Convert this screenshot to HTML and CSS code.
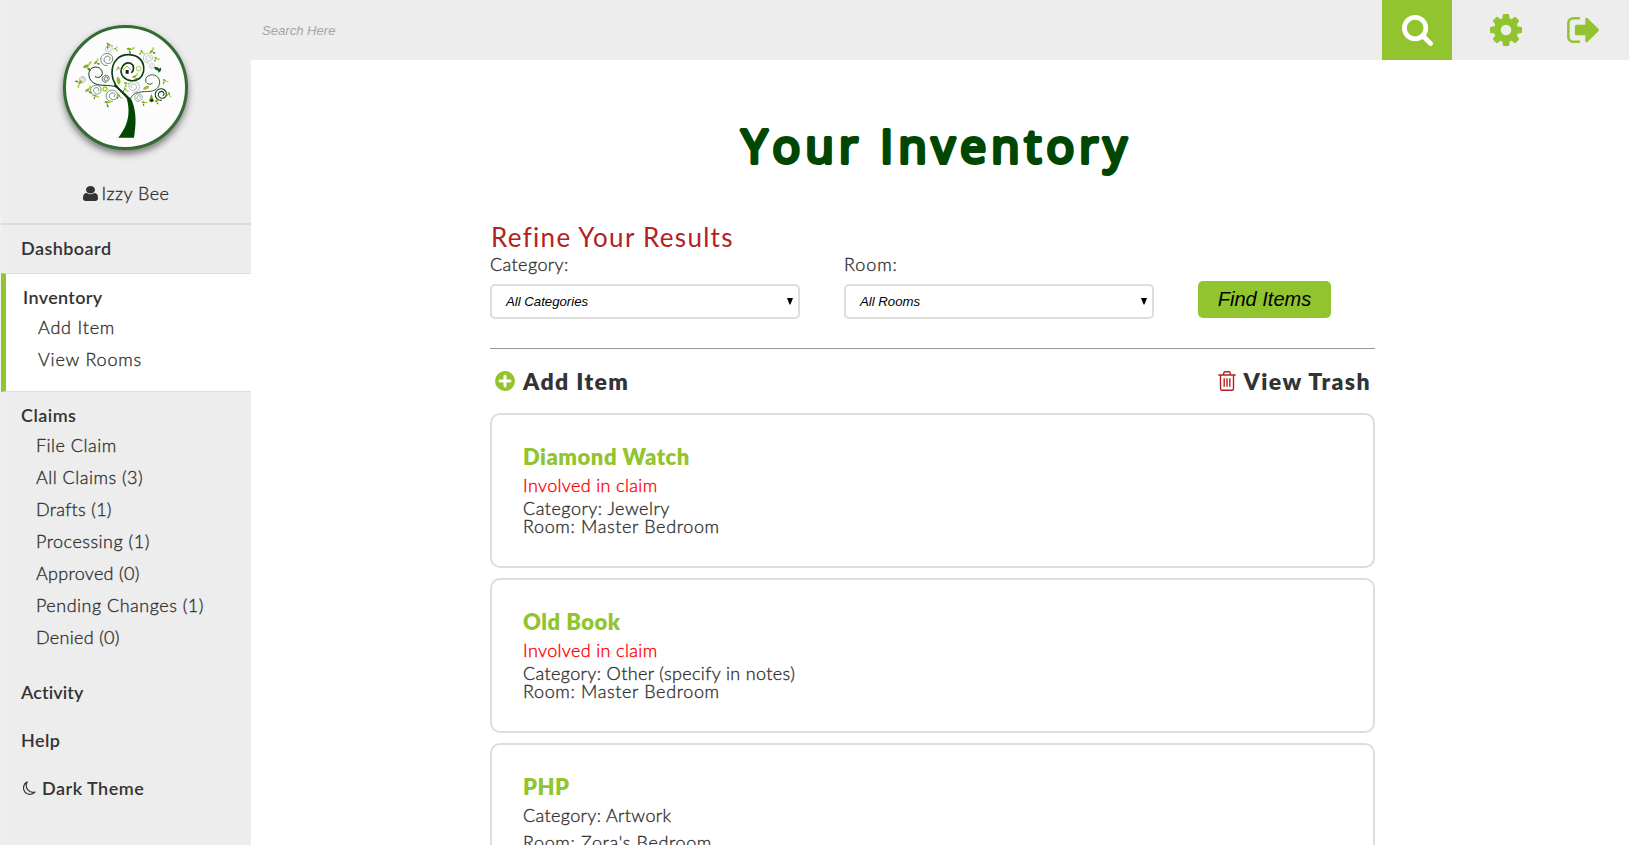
FILE: index.html
```html
<!DOCTYPE html>
<html lang="en">
<head>
<meta charset="utf-8">
<title>Your Inventory</title>
<link rel="stylesheet" href="styles.css">
</head>
<body>
<aside class="sidebar">
  <div class="profile">
    <div class="logo">
      <svg viewBox="33 39 357 357" width="119" height="119">
        <defs>
          <path id="curl" d="M0 22C-14 24-24 12-23-1C-22-15-8-23 5-20C17-17 22-4 17 7C12 16-2 18-9 9C-15 1-10-10 0-11C9-12 13-1 7 4" fill="none" stroke-linecap="round"/>
          <path id="leaf" d="M-9 4C-7-5 2-7 10-5C7 3 0 7-9 4Z"/>
          <g id="sprig">
            <use href="#leaf" fill="#7fae1c"/>
            <use href="#leaf" fill="#b5d334" transform="translate(12 -9) rotate(-30) scale(.8)"/>
            <use href="#leaf" fill="#4b8a2a" transform="translate(9 9) rotate(60) scale(.7)"/>
          </g>
        </defs>
        <path d="M190 368C216 336 228 300 216 253L222 247L230 255C247 295 242 335 237 368Z" fill="#014701"/>
        <g fill="none" stroke="#0b3b12" stroke-linecap="round">
          <path d="M222 256C205 230 172 215 171 175C170 140 192 118 222 119C253 120 269 142 266 167C262 190 245 199 228 197C208 194 195 180 199 162C203 147 216 141 227 145C238 151 238 166 230 172" stroke-width="5"/>
          <path d="M192 221C172 205 142 216 120 206C102 198 96 175 107 162C119 151 139 156 142 172C143 184 130 192 121 185" stroke-width="3"/>
          <path d="M226 252C234 228 262 231 286 229C306 227 319 210 312 192C304 176 280 175 273 190C268 203 281 213 292 205" stroke-width="2.5"/>
          <path d="M222 250C205 232 190 222 180 211" stroke-width="5"/>
        </g>
        <g stroke="#3c5a42" stroke-width="2.5">
          <use href="#curl" transform="translate(157 133) scale(.85)"/>
          <use href="#curl" transform="translate(124 226) scale(.75)"/>
          <use href="#curl" transform="translate(172 242) scale(.8)"/>
          <use href="#curl" transform="translate(319 238) scale(.8)" stroke="#0b3b12" stroke-width="4"/>
          <use href="#curl" transform="translate(236 215) scale(-.75 .75)" stroke="#8a9a8c"/>
          <use href="#curl" transform="translate(280 129) scale(.65)" stroke="#8a9a8c"/>
          <use href="#curl" transform="translate(252 248) scale(.55)"/>
          <use href="#curl" transform="translate(153 191) scale(.5)" stroke="#0b3b12" stroke-width="4"/>
          <use href="#curl" transform="translate(83 194) scale(.45)"/>
          <use href="#curl" transform="translate(163 101) scale(.5)" stroke="#8a9a8c"/>
          <use href="#curl" transform="translate(291 153) scale(.4)" stroke="#8a9a8c"/>
        </g>
        <use href="#sprig" transform="translate(160 88) rotate(60) scale(.7)"/>
        <use href="#sprig" transform="translate(93 154)"/>
        <use href="#sprig" transform="translate(122 143) rotate(-20) scale(.7)"/>
        <use href="#sprig" transform="translate(75 202) rotate(150) scale(.8)"/>
        <use href="#sprig" transform="translate(97 226) rotate(-10) scale(.8)"/>
        <use href="#sprig" transform="translate(120 242) rotate(60) scale(.6)"/>
        <use href="#sprig" transform="translate(155 262) rotate(30) scale(.8)"/>
        <use href="#sprig" transform="translate(192 242) rotate(80) scale(.6)"/>
        <use href="#sprig" transform="translate(180 101) scale(.5)"/>
        <use href="#sprig" transform="translate(222 102) rotate(30) scale(.8)"/>
        <use href="#sprig" transform="translate(260 109) rotate(80) scale(.6)"/>
        <use href="#sprig" transform="translate(289 110) rotate(-20) scale(.7)"/>
        <use href="#sprig" transform="translate(302 129) rotate(60) scale(.6)"/>
        <use href="#leaf" fill="#145c1c" transform="translate(306 162) rotate(50)"/>
        <use href="#leaf" fill="#145c1c" transform="translate(314 166) rotate(-40) scale(.8)"/>
        <use href="#sprig" transform="translate(328 196) rotate(60) scale(.6)"/>
        <use href="#sprig" transform="translate(342 236) rotate(100) scale(.6)"/>
        <use href="#sprig" transform="translate(304 258) rotate(20) scale(.6)"/>
        <use href="#sprig" transform="translate(265 262) rotate(40) scale(.6)"/>
        <use href="#sprig" transform="translate(210 222) rotate(80) scale(.6)"/>
        <use href="#sprig" transform="translate(212 205) rotate(40) scale(.6)"/>
        <use href="#sprig" transform="translate(238 185) scale(.7)"/>
        <use href="#sprig" transform="translate(190 158) rotate(80) scale(.5)"/>
        <use href="#leaf" fill="#9bbf22" transform="translate(191 197) rotate(-80) scale(1.2)"/>
        <use href="#leaf" fill="#9bbf22" transform="translate(273 219)"/>
        <circle cx="150" cy="222" r="6" fill="none" stroke="#a5cc2a" stroke-width="4"/>
        <circle cx="251" cy="161" r="7" fill="none" stroke="#a5cc2a" stroke-width="3"/>
        <path d="M204 165L216 153L228 165" fill="none" stroke="#8fc42d" stroke-width="3"/>
        <path d="M212 165h9v11h-9z" fill="#1c1c1c"/>
        <path d="M289 236L297 258Q289 266 282 258Z" fill="#6d9a25"/>
        <circle cx="290" cy="256" r="4" fill="#1c1c1c"/>
      </svg>
    </div>
    <div class="user">
      <svg class="user-icon" viewBox="256 128 1280 1536" preserveAspectRatio="none"><path d="M1536 1399q0 109-62.500 187t-150.500 78h-854q-88 0-150.500-78t-62.500-187q0-85 8.500-160.500t31.500-152 58.500-131 94-89 134.500-34.500q131 128 313 128t313-128q76 0 134.500 34.500t94 89 58.500 131 31.500 152 8.500 160.500zm-256-887q0 159-112.500 271.500t-271.500 112.500-271.500-112.500-112.500-271.500 112.500-271.500 271.500-112.500 271.500 112.500 112.500 271.500z"/></svg>
      <span>Izzy Bee</span>
    </div>
  </div>
  <nav>
    <div class="group dashboard"><a class="top">Dashboard</a></div>
    <div class="group active">
      <a class="top tight">Inventory</a>
      <a class="sub wide">Add Item</a>
      <a class="sub wide">View Rooms</a>
    </div>
    <div class="group claims">
      <a class="top">Claims</a>
      <a class="sub">File Claim</a>
      <a class="sub">All Claims (3)</a>
      <a class="sub narrow">Drafts (1)</a>
      <a class="sub">Processing (1)</a>
      <a class="sub narrow">Approved (0)</a>
      <a class="sub">Pending Changes (1)</a>
      <a class="sub narrow">Denied (0)</a>
    </div>
    <div class="group plain"><a class="top snug">Activity</a></div>
    <div class="group plain"><a class="top">Help</a></div>
    <div class="group plain"><a class="top theme">
      <svg class="moon" viewBox="0 0 15 15"><path d="M6.200 .9A6.600 6.600 0 1 0 14 11.200A7 7 0 0 1 6.200 .9Z" fill="none" stroke="#333" stroke-width="1.200" stroke-linejoin="round"/></svg>Dark Theme</a></div>
  </nav>
</aside>

<div class="page">
  <header class="topbar">
    <div class="search">Search Here</div>
    <div class="search-btn">
      <svg width="31" height="31" viewBox="64 128 1664 1664"><path d="M1216 832q0-185-131.500-316.500t-316.500-131.500-316.500 131.500-131.500 316.500 131.500 316.500 316.500 131.500 316.500-131.500 131.500-316.500zm512 832q0 52-38 90t-90 38q-54 0-90-38l-343-342q-179 124-399 124-143 0-273.500-55.500t-225-150-150-225-55.500-273.500 55.500-273.500 150-225 225-150 273.500-55.500 273.500 55.500 225 150 150 225 55.500 273.500q0 220-124 399l343 343q37 37 37 90z"/></svg>
    </div>
    <svg class="cog" width="32" height="32" viewBox="128 128 1536 1536"><path d="M1152 896q0-106-75-181t-181-75-181 75-75 181 75 181 181 75 181-75 75-181zm512-109v222q0 12-8 23t-20 13l-185 28q-19 54-39 91 35 50 107 138 10 12 10 25t-9 23q-27 37-99 108t-94 71q-12 0-26-9l-138-108q-44 23-91 38-16 136-29 186-7 28-36 28h-222q-14 0-24.500-8.500t-11.500-21.500l-28-184q-49-16-90-37l-141 107q-10 9-25 9-14 0-25-11-126-114-165-168-7-10-7-23 0-12 8-23 15-21 51-66.500t54-70.500q-27-50-41-99l-183-27q-13-2-21-12.500t-8-23.500v-222q0-12 8-23t19-13l186-28q14-46 39-92-40-57-107-138-10-12-10-24 0-10 9-23 26-36 98.500-107.500t94.500-71.500q13 0 26 10l138 107q44-23 91-38 16-136 29-186 7-28 36-28h222q14 0 24.500 8.500t11.500 21.500l28 184q49 16 90 37l142-107q9-9 24-9 13 0 25 10 129 119 165 170 7 8 7 22 0 12-8 23-15 21-51 66.500t-54 70.500q26 50 41 98l183 28q13 2 21 12.500t8 23.500z"/></svg>
    <svg class="signout" width="32" height="26" viewBox="64 256 1568 1280"><path d="M704 1440q0 4 1 20t.5 26.500-3 23.500-10 19.500-20.500 6.500h-320q-119 0-203.500-84.500t-84.500-203.500v-704q0-119 84.500-203.500t203.500-84.500h320q13 0 22.500 9.500t9.500 22.500q0 4 1 20t.5 26.500-3 23.500-10 19.500-20.500 6.500h-320q-66 0-113 47t-47 113v704q0 66 47 113t113 47h312l11.500 1 11.500 3 8 5.500 7 9 2 13.500zm928-544q0 26-19 45l-544 544q-19 19-45 19t-45-19-19-45v-288h-448q-26 0-45-19t-19-45v-384q0-26 19-45t45-19h448v-288q0-26 19-45t45-19 45 19l544 544q19 19 19 45z"/></svg>
  </header>

  <main class="content">
    <h1><svg width="885" height="70"><text class="headline" x="251.500" y="53" textLength="385">Your Inventory</text></svg></h1>
    <h2>Refine Your Results</h2>
    <div class="filters">
      <div class="field">
        <label>Category:</label>
        <div class="select"><span>All Categories</span><svg width="6" height="7" viewBox="0 0 7 7" preserveAspectRatio="none"><path d="M0 0H7L4 6.500H3Z"/></svg></div>
      </div>
      <div class="field">
        <label class="room">Room:</label>
        <div class="select"><span>All Rooms</span><svg width="6" height="7" viewBox="0 0 7 7" preserveAspectRatio="none"><path d="M0 0H7L4 6.500H3Z"/></svg></div>
      </div>
      <div class="find">Find Items</div>
    </div>
    <hr>
    <div class="actions">
      <a class="add"><svg width="20" height="20" viewBox="0 0 20 20"><circle cx="10" cy="10" r="10" fill="#91c42e"/><path d="M10 5V15M5 10H15" stroke="#fff" stroke-width="3" stroke-linecap="round"/></svg>Add Item</a>
      <a class="trash"><svg width="18" height="20" viewBox="0 0 18 20" fill="none" stroke="#b22222" stroke-width="1.400"><path d="M.3 4H17.700M2.500 4V17.500Q2.500 19.300 4 19.300H14Q15.500 19.300 15.500 17.500V4M5.200 4L6 1.500Q6.200 .7 7 .7H11Q11.800 .7 12 1.500L12.800 4M6.200 7.300V15.800M9 7.300V15.800M11.800 7.300V15.800"/></svg>View Trash</a>
    </div>
    <div class="cards">
      <article class="card">
        <h3>Diamond Watch</h3>
        <p class="flag">Involved in claim</p>
        <p class="line short">Category: Jewelry</p>
        <p class="line place">Room: Master Bedroom</p>
      </article>
      <article class="card">
        <h3>Old Book</h3>
        <p class="flag">Involved in claim</p>
        <p class="line">Category: Other (specify in notes)</p>
        <p class="line place">Room: Master Bedroom</p>
      </article>
      <article class="card loose">
        <h3>PHP</h3>
        <p class="line">Category: Artwork</p>
        <p class="line place">Room: Zora's Bedroom</p>
      </article>
    </div>
  </main>
</div>
</body>
</html>
```
FILE: styles.css
```css
* { box-sizing: border-box; }
body {
  margin: 0;
  height: 845px;
  overflow: hidden;
  display: flex;
  background: #fff;
  color: #333;
  font: 300 18px/18px Lato, "Open Sans", sans-serif;
}
h1, h2, h3, p { margin: 0; }
svg { display: block; flex: none; }

.sidebar {
  width: 251px;
  height: 845px;
  flex: none;
  background: #ededed;
  border-left: 1px solid #f0f0f0;
}
.profile {
  height: 225px;
  padding-top: 25px;
  border-bottom: 2px solid #ddd;
  display: flex;
  flex-direction: column;
  align-items: center;
}
.logo {
  width: 125px;
  height: 125px;
  margin-right: 1px;
  border: 3px solid #346b35;
  border-radius: 50%;
  background: #fcfcfc;
  box-shadow: 0 4px 7px rgba(0, 0, 0, .5);
  overflow: hidden;
}
.user {
  margin-top: 29px;
  display: flex;
  align-items: center;
  gap: 4px;
  line-height: 28px;
  letter-spacing: .5px;
}
.user-icon { width: 15px; height: 15px; fill: #333; }

/* Firms up the light weight at body sizes */
.user, .sub, label, .line, .flag { -webkit-text-stroke: .35px currentColor; }

.group { padding-left: 20px; }
.top {
  display: block;
  font-weight: 600;
  line-height: 28px;
  letter-spacing: .45px;
}
.tight { letter-spacing: .35px; }
.snug { letter-spacing: .1px; }
.theme { display: flex; align-items: center; gap: 6px; letter-spacing: .5px; }
.moon { width: 15px; height: 15px; }
.sub {
  display: block;
  padding-left: 15px;
  line-height: 32px;
  letter-spacing: .5px;
}
.wide { padding-left: 15px; letter-spacing: .8px; }
.narrow { letter-spacing: .3px; }
.dashboard { padding-top: 9px; padding-bottom: 11px; }
.active {
  padding: 9px 0 16px 17px;
  background: #fff;
  border-left: 5px solid #91c42e;
  border-top: 1px solid #ddd;
  border-bottom: 1px solid #ddd;
}
.claims { padding-top: 9px; padding-bottom: 15px; }
.plain { padding-top: 10px; padding-bottom: 10px; }

.page { flex: 1; min-width: 0; }
.topbar {
  height: 60px;
  background: #ededed;
  display: flex;
  align-items: center;
  padding-right: 30px;
}
.search {
  flex: 1;
  padding-left: 11px;
  color: #a5a5a5;
  font: italic 13.1px "Liberation Sans", sans-serif;
}
.search-btn {
  width: 70px;
  height: 60px;
  margin-right: 38px;
  background: #91c42e;
  fill: #fff;
  display: flex;
  align-items: center;
  justify-content: center;
}
.cog, .signout { fill: #91c42e; }
.cog { margin-right: 45px; }

.content { width: 885px; margin-left: 239px; padding-top: 50px; }
.headline {
  font: 500 46px "Open Sans", sans-serif;
  fill: #014701;
  stroke: #014701;
  stroke-width: 4px;
  stroke-linejoin: round;
}
h2 {
  margin-top: 42px;
  padding-left: 1px;
  font-size: 26px;
  line-height: 30px;
  font-weight: 400;
  letter-spacing: 1.3px;
  color: #b22222;
}
.filters { display: flex; gap: 44px; margin-top: 3px; align-items: flex-start; }
.field { width: 310px; }
label { display: block; line-height: 18px; letter-spacing: .4px; }
.room { letter-spacing: .9px; }
.select {
  height: 35px;
  margin-top: 11px;
  padding: 0 5px 0 14px;
  border: 2px solid #ddd;
  border-radius: 5px;
  display: flex;
  align-items: center;
  justify-content: space-between;
  color: #000;
  font: italic 13.2px "Liberation Sans", sans-serif;
}
.find {
  width: 133px;
  height: 37px;
  margin-top: 26px;
  border-radius: 5px;
  background: #91c42e;
  color: #000;
  font: italic 20px/36px "Liberation Sans", sans-serif;
  text-align: center;
}
hr {
  height: 2px;
  margin: 29px 0 0;
  border: 0;
  border-top: 1px solid #999;
}
.actions {
  display: flex;
  justify-content: space-between;
  margin-top: 16px;
  padding: 0 4px 0 5px;
  font-size: 23px;
  line-height: 30px;
}
.add, .trash { display: flex; align-items: center; gap: 8px; }
.add { font-weight: 800; letter-spacing: 1.35px; }
.trash { font-weight: 800; letter-spacing: 1.4px; }
.cards { margin-top: 17px; display: flex; flex-direction: column; gap: 10px; }
.card {
  height: 155px;
  padding: 29px 31px 0;
  border: 2px solid #ddd;
  border-radius: 10px;
}
h3 {
  font-size: 22px;
  line-height: 26px;
  font-weight: 800;
  letter-spacing: .5px;
  color: #91c42e;
}
.flag { margin: 4px 0 3px; line-height: 22px; letter-spacing: .35px; color: #f00; }
.line { letter-spacing: .36px; }
.short { letter-spacing: .5px; }
.place { letter-spacing: .64px; }
.loose h3 { margin-bottom: 2px; }
.loose .line { line-height: 27px; }
```
